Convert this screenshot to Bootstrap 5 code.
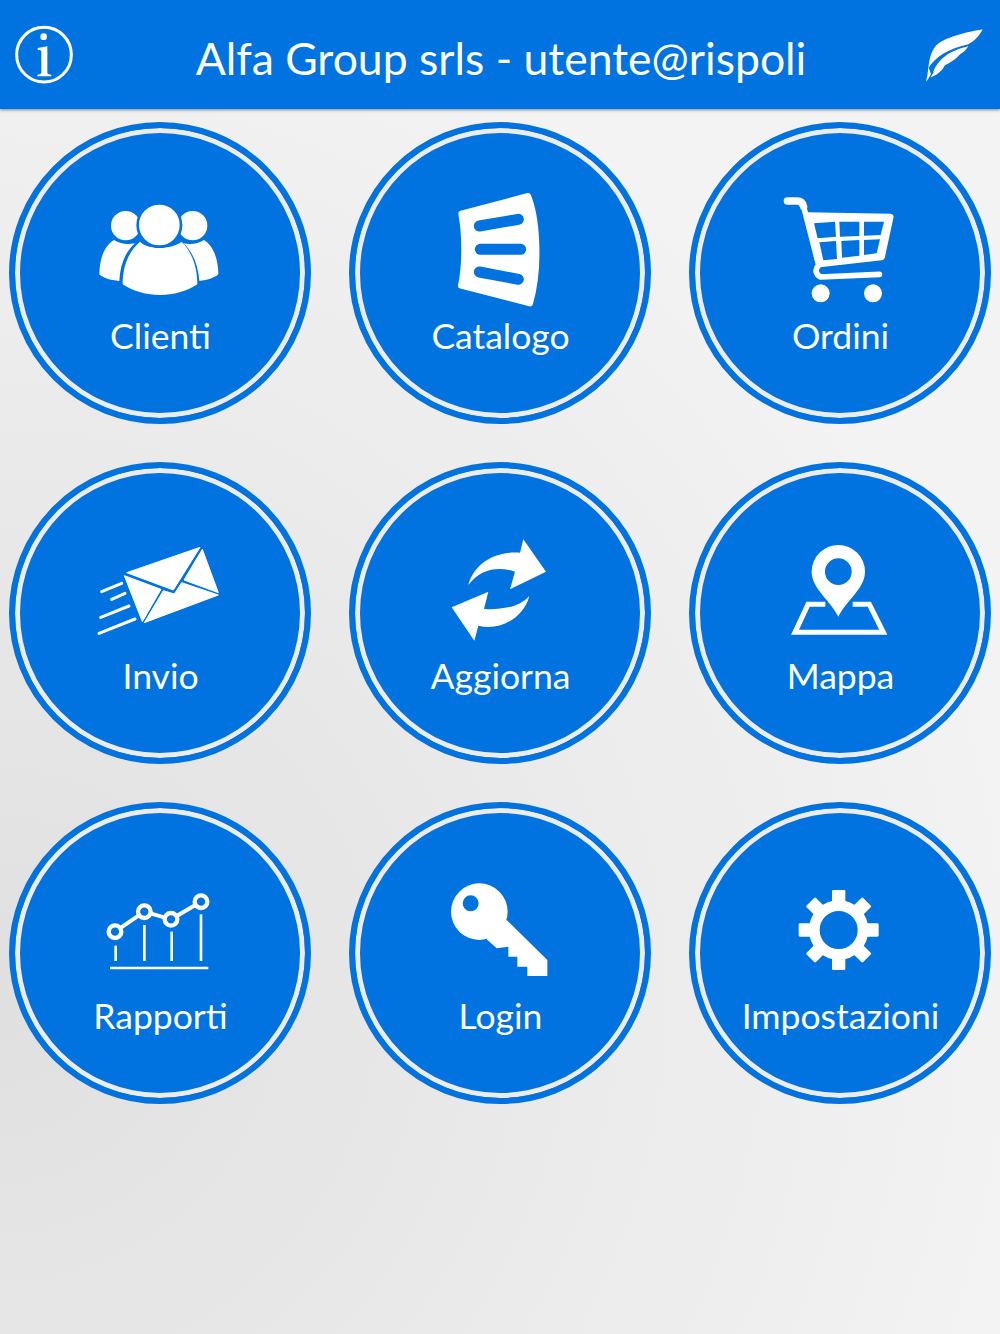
<!DOCTYPE html>
<html lang="it">
  <head>
    <meta charset="utf-8" />
    <title>Alfa Group srls</title>
    <link
      href="https://cdn.jsdelivr.net/npm/bootstrap@5.3.0/dist/css/bootstrap.min.css"
      rel="stylesheet"
    />
    <style>
      body {
        min-height: 1334px;
        font-family: Lato, sans-serif;
        background: radial-gradient(circle 1050px at 0 1000px, #e0e0e0, #f3f3f3);
      }

      .app-header {
        height: 109px;
        padding: 0 15px 0 14px;
        background-color: #0073e0;
        box-shadow: 0 1px 3px rgba(0, 0, 0, 0.45);
      }

      .app-title {
        padding: 8px 0 0 3px;
        font-size: 44.5px;
        line-height: 1;
      }

      .app-header svg {
        width: 60px;
        height: 60px;
      }

      .tile-grid {
        display: grid;
        grid-template-columns: repeat(3, 302px);
        gap: 38px;
        justify-content: center;
        padding-top: 13px;
      }

      .tile {
        width: 302px;
        height: 302px;
        padding-top: 62px;
        background-color: #0073e0;
        border: 6px solid #0073e0;
        box-shadow: inset 0 0 0 5px #ececec;
        font-size: 35.5px;
        line-height: 40px;
      }

      .tile svg {
        width: 140px;
        height: 120px;
        margin-bottom: 6px;
        flex-shrink: 0;
      }

      .tile span {
        padding-left: 1px;
      }
    </style>
  </head>
  <body>
    <header class="app-header d-flex align-items-center justify-content-between text-white">
      <svg viewBox="42 78 180 180" aria-hidden="true">
        <circle cx="132" cy="167" r="82" fill="none" stroke="#fff" stroke-width="9" />
        <circle cx="131" cy="113" r="10" fill="#fff" />
        <path fill="#fff" d="M113,147 L142,142 V222 Q142,226 154,227 V232 H112 V227 Q124,226 124,222 V158 Q124,152 113,152 Z" />
      </svg>
      <span class="app-title">Alfa Group srls - utente@rispoli</span>
      <svg viewBox="75 75 180 180" aria-hidden="true">
        <g fill="#fff">
          <path d="M248,88 C195,98 130,112 105,140 C93,158 88,175 85,205 C105,170 150,145 205,133 C225,122 240,105 248,88 Z" />
          <path d="M205,139 C160,150 118,168 99,218 C125,198 165,185 180,163 C190,157 198,150 205,139 Z" />
          <path d="M138,188 C118,198 102,212 92,232 C108,226 128,214 138,188 Z" />
          <path d="M85,200 C84,218 81,232 78,245 C84,238 88,232 93,222 Z" />
        </g>
      </svg>
    </header>

    <main class="tile-grid">
      <a href="#" class="tile rounded-circle d-flex flex-column align-items-center text-white text-decoration-none">
        <svg viewBox="0 -15 420 360" aria-hidden="true">
          <g fill="#fff">
            <circle cx="107" cy="92" r="44" />
            <circle cx="308" cy="92" r="44" />
            <path d="M28,238 C28,190 45,150 72,135 C90,146 110,150 135,145 C105,172 90,210 88,258 C60,255 40,250 28,238 Z" />
            <path d="M385,238 C385,190 368,150 342,135 C324,146 304,150 280,145 C310,172 324,210 328,258 C352,255 372,250 385,238 Z" />
            <path d="M150,140 C175,165 240,165 275,140 C305,170 322,215 322,268 C290,290 250,300 210,300 C170,300 130,290 98,268 C98,215 115,170 150,140 Z" />
            <circle cx="208" cy="90" r="65" stroke="#0073e0" stroke-width="8" />
          </g>
        </svg>
        <span>Clienti</span>
      </a>

      <a href="#" class="tile rounded-circle d-flex flex-column align-items-center text-white text-decoration-none">
        <svg viewBox="0 30 420 360" aria-hidden="true">
          <path fill="#fff" stroke="#fff" stroke-width="18" stroke-linejoin="round" d="M94,101 L294,48 C320,110 332,260 300,370 L93,317 C107,250 105,160 94,101 Z" />
          <g stroke="#0073e0" stroke-width="33" stroke-linecap="round">
            <path d="M148,138 L265,118" />
            <path d="M151,208 H272" />
            <path d="M148,276 L265,298" />
          </g>
        </svg>
        <span>Catalogo</span>
      </a>

      <a href="#" class="tile rounded-circle d-flex flex-column align-items-center text-white text-decoration-none">
        <svg viewBox="0 15 420 360" aria-hidden="true">
          <path fill="#fff" d="M108,82 L362,86 Q373,88 370,100 L345,215 Q343,225 335,226 L150,247 Z" />
          <path fill="#0073e0" d="M132,115 L195,110 L198,155 L143,160 Z M208,110 H268 V153 L210,155 Z M282,110 H342 L332,150 L282,152 Z M148,172 L198,168 L201,222 L160,226 Z M214,168 L268,165 V212 L216,218 Z M282,165 L330,163 L320,205 L282,210 Z" />
          <g fill="none" stroke="#fff" stroke-linecap="round" stroke-linejoin="round">
            <path stroke-width="22" d="M52,48 H82 Q97,48 101,65" />
            <path stroke-width="17" d="M101,65 L146,240 Q128,262 152,276 L328,268" />
          </g>
          <circle cx="152" cy="325" r="27" fill="#fff" />
          <circle cx="309" cy="325" r="27" fill="#fff" />
        </svg>
        <span>Ordini</span>
      </a>

      <a href="#" class="tile rounded-circle d-flex flex-column align-items-center text-white text-decoration-none">
        <svg viewBox="15 0 420 360" aria-hidden="true">
          <g fill="#fff" stroke="#fff" stroke-width="3" stroke-linejoin="round">
            <path d="M125,128 L345,52 L265,180 Z" />
            <path d="M118,137 L228,178 L172,275 Z" />
            <path d="M235,182 L268,192 L290,158 L400,195 L178,278 Z" />
            <path d="M352,58 L400,188 L297,150 Z" />
          </g>
          <g stroke="#fff" stroke-width="9" stroke-linecap="round">
            <path d="M50,185 L110,160" />
            <path d="M80,208 L120,190" />
            <path d="M47,262 L132,228" />
            <path d="M42,310 L150,267" />
          </g>
        </svg>
        <span>Invio</span>
      </a>

      <a href="#" class="tile rounded-circle d-flex flex-column align-items-center text-white text-decoration-none">
        <svg viewBox="-15 0 420 360" aria-hidden="true">
          <g fill="#fff">
            <path d="M100,165 C115,105 175,62 255,68 L265,28 L333,125 L225,178 L240,125 C195,110 140,112 100,165 Z" />
            <path d="M283,197 C268,262 195,305 130,287 L118,332 L50,232 L160,185 L147,237 C195,240 255,232 283,197 Z" />
          </g>
        </svg>
        <span>Aggiorna</span>
      </a>

      <a href="#" class="tile rounded-circle d-flex flex-column align-items-center text-white text-decoration-none">
        <svg viewBox="-30 -15 420 360" aria-hidden="true">
          <path fill="none" stroke="#fff" stroke-width="15" d="M136,208 H84 L45,292 H310 L268,208 H218" />
          <path fill="#fff" fill-rule="evenodd" d="M175,245 C150,195 95,160 95,110 A80,80 0 0 1 255,110 C255,160 200,195 175,245 Z M215,110 A40,40 0 1 0 135,110 A40,40 0 1 0 215,110 Z" />
        </svg>
        <span>Mappa</span>
      </a>

      <a href="#" class="tile rounded-circle d-flex flex-column align-items-center text-white text-decoration-none">
        <svg viewBox="-15 -30 420 360" aria-hidden="true">
          <g fill="none" stroke="#fff" stroke-width="8">
            <path d="M62,197 V243" />
            <path d="M148,135 V243" />
            <path d="M230,155 V243" />
            <path d="M318,103 V243" />
            <path d="M45,264 H340" />
            <path stroke-width="12" d="M60,155 L148,95 L228,118 L318,65" />
          </g>
          <g fill="#0073e0" stroke="#fff" stroke-width="13">
            <circle cx="60" cy="155" r="19" />
            <circle cx="148" cy="95" r="19" />
            <circle cx="228" cy="118" r="19" />
            <circle cx="318" cy="65" r="19" />
          </g>
        </svg>
        <span>Rapporti</span>
      </a>

      <a href="#" class="tile rounded-circle d-flex flex-column align-items-center text-white text-decoration-none">
        <svg viewBox="-30 -15 420 360" aria-hidden="true">
          <path fill="#fff" d="M200,135 L322,255 V303 H262 V275 H232 V245 H205 V215 L170,220 L140,193 Z" />
          <path fill="#fff" fill-rule="evenodd" d="M203,110 A85,85 0 1 1 33,110 A85,85 0 1 1 203,110 Z M116,85 A24,24 0 1 0 68,85 A24,24 0 1 0 116,85 Z" />
        </svg>
        <span>Login</span>
      </a>

      <a href="#" class="tile rounded-circle d-flex flex-column align-items-center text-white text-decoration-none">
        <svg viewBox="-45 -30 420 360" aria-hidden="true">
          <circle cx="161" cy="150" r="73" fill="none" stroke="#fff" stroke-width="32" />
          <g fill="#fff">
            <rect x="141" y="30" width="40" height="45" rx="4" />
            <rect x="141" y="30" width="40" height="45" rx="4" transform="rotate(45 161 150)" />
            <rect x="141" y="30" width="40" height="45" rx="4" transform="rotate(90 161 150)" />
            <rect x="141" y="30" width="40" height="45" rx="4" transform="rotate(135 161 150)" />
            <rect x="141" y="30" width="40" height="45" rx="4" transform="rotate(180 161 150)" />
            <rect x="141" y="30" width="40" height="45" rx="4" transform="rotate(225 161 150)" />
            <rect x="141" y="30" width="40" height="45" rx="4" transform="rotate(270 161 150)" />
            <rect x="141" y="30" width="40" height="45" rx="4" transform="rotate(315 161 150)" />
          </g>
        </svg>
        <span>Impostazioni</span>
      </a>
    </main>

    <script src="https://cdn.jsdelivr.net/npm/bootstrap@5.3.0/dist/js/bootstrap.bundle.min.js"></script>
  </body>
</html>
